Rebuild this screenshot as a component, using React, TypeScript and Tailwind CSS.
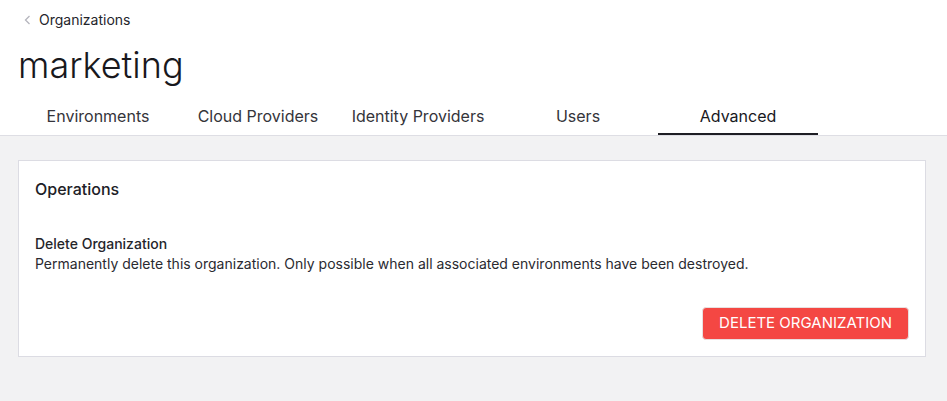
import React from 'react';

const tabs = ['Environments', 'Cloud Providers', 'Identity Providers', 'Users', 'Advanced'];

function ChevronLeft() {
  return (
    <svg width="7" height="10" viewBox="0 0 7 10" fill="none" className="mr-[8px]">
      <path d="M5.5 1 L1.5 5 L5.5 9" stroke="#b5b5bd" strokeWidth="1.3" />
    </svg>
  );
}

export default function App() {
  const active = 'Advanced';
  return (
    <div className="min-h-[401px] bg-[#f2f2f3] font-['Inter',sans-serif] text-[#1e1e24]">
      <div className="bg-white">
        <div className="flex items-center pl-[24px] pt-[9px] h-[30px] text-[14px] text-[#25252b]">
          <ChevronLeft />
          <span>Organizations</span>
        </div>
        <h1 className="pl-[18px] pt-[13px] text-[36px] leading-[45px] font-light text-[#18181d]">marketing</h1>
        <div className="flex pl-[18px] mt-[9px] border-b border-[#dedee4]">
          {tabs.map((t) => (
            <div
              key={t}
              className={`w-[160px] h-[38px] flex items-center justify-center text-[16px] ${
                t === active ? 'border-b-2 border-[#1e1e24] text-[#18181d]' : 'text-[#34343a]'
              }`}
            >
              <span className={t === active ? 'pt-[2px]' : ''}>{t}</span>
            </div>
          ))}
        </div>
      </div>
      <div className="pt-[24px] pl-[18px]">
        <div className="w-[908px] h-[197px] bg-white border border-[#dcdce3] px-[16px] pt-[18px] flex flex-col">
          <h2 className="text-[16px] leading-[20px] font-medium text-[#202026]">Operations</h2>
          <div className="mt-[35px]">
            <div className="text-[14px] leading-[20px] font-medium text-[#25252b]">Delete Organization</div>
            <p className="text-[14px] leading-[20px] text-[#2a2a30]">
              Permanently delete this organization. Only possible when all associated environments have been destroyed.
            </p>
          </div>
          <div className="flex justify-end mt-[33px]">
            <button className="h-[33px] px-[16px] bg-[#f44743] text-white text-[15px] rounded-[4px] uppercase border border-[#e8e0e0]">
              Delete Organization
            </button>
          </div>
        </div>
      </div>
    </div>
  );
}
